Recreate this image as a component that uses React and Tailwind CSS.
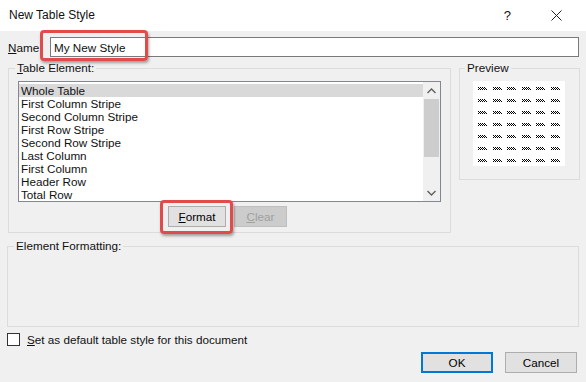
import React from 'react';

const items = [
  'Whole Table',
  'First Column Stripe',
  'Second Column Stripe',
  'First Row Stripe',
  'Second Row Stripe',
  'Last Column',
  'First Column',
  'Header Row',
  'Total Row',
];

function Glyph() {
  return (
    <svg width="9" height="4" viewBox="0 0 9 4" className="block">
      {[0, 2, 4, 6].map((x) => (
        <rect key={'a' + x} x={x} y="0" width="1" height="1" fill="#000" />
      ))}
      {[1, 3, 5, 7].map((x) => (
        <rect key={'b' + x} x={x} y="1" width="1" height="1" fill="#000" />
      ))}
      {[0, 2, 4, 6, 8].map((x) => (
        <rect key={'c' + x} x={x} y="2" width="1" height="1" fill="#000" />
      ))}
    </svg>
  );
}

function Button({ children, disabled, primary, className = '' }) {
  return (
    <div
      className={
        'flex h-[21px] items-center justify-center ' +
        (disabled
          ? 'border border-[#bfbfbf] bg-[#cccccc] text-[#a0a0a0] '
          : primary
          ? 'border-2 border-[#0078d7] bg-[#e1e1e1] text-black '
          : 'border border-[#adadad] bg-[#e1e1e1] text-black ') +
        className
      }
    >
      {children}
    </div>
  );
}

export default function App() {
  return (
    <div
      className="relative h-[382px] w-[586px] overflow-hidden bg-[#f0f0f0] text-[11.7px] leading-[13px] text-[#111]"
      style={{ fontFamily: '"Liberation Sans", Arial, sans-serif' }}
    >
      {/* title bar */}
      <div className="flex h-[31px] items-center bg-white pl-[9px] pr-[24px]">
        <span className="text-[12px]">New Table Style</span>
        <span className="ml-auto mr-[40px] text-[13px]">?</span>
        <svg width="11" height="11" viewBox="0 0 11 11">
          <path d="M0.5 0.5 L10.5 10.5 M10.5 0.5 L0.5 10.5" stroke="#222" strokeWidth="1" />
        </svg>
      </div>

      {/* name row */}
      <div className="mt-[6px] flex h-[20px] items-center pl-[8px] pr-[7px]">
        <span className="w-[42px]">
          <span className="underline">N</span>ame:
        </span>
        <div className="flex h-[20px] flex-1 items-center border border-[#7a7a7a] bg-white pl-[3px]">
          My New Style
        </div>
      </div>

      {/* groups */}
      <div className="mt-[4px] flex pl-[8px] pr-[6px]">
        <fieldset className="h-[172px] w-[443px] border border-[#dcdcdc] px-[9px] pt-[6px]">
          <legend className="-ml-[3px] px-[2px] leading-[14px]">
            <span className="underline">T</span>able Element:
          </legend>
          <div className="flex h-[121px] border border-[#828790] bg-white">
            <div className="flex-1 pt-[2px]">
              {items.map((it, i) => (
                <div
                  key={it}
                  className={'h-[13px] pl-[2px] ' + (i === 0 ? 'bg-[#d9d9d9]' : '')}
                >
                  {it}
                </div>
              ))}
            </div>
            <div className="flex w-[17px] flex-col items-center bg-[#f0f0f0]">
              <div className="flex h-[17px] items-center justify-center">
                <svg width="9" height="6" viewBox="0 0 9 6">
                  <path d="M0.5 5 L4.5 1 L8.5 5" stroke="#606060" strokeWidth="1.4" fill="none" />
                </svg>
              </div>
              <div className="h-[58px] w-[15px] bg-[#cdcdcd]" />
              <div className="mt-auto flex h-[17px] items-center justify-center">
                <svg width="9" height="6" viewBox="0 0 9 6">
                  <path d="M0.5 1 L4.5 5 L8.5 1" stroke="#606060" strokeWidth="1.4" fill="none" />
                </svg>
              </div>
            </div>
          </div>
          <div className="mt-[4px] flex gap-[8px] pl-[150px]">
            <Button className="w-[58px]">
              <span className="underline">F</span>ormat
            </Button>
            <Button disabled className="w-[53px]">
              <span className="underline">C</span>lear
            </Button>
          </div>
        </fieldset>

        <fieldset className="ml-[8px] h-[119px] w-[121px] border border-[#dcdcdc] pl-[13px] pt-[6px]">
          <legend className="-ml-[8px] px-[2px] leading-[14px]">Preview</legend>
          <div className="grid h-[85px] w-[92px] grid-cols-6 content-start gap-y-[8px] bg-white pl-[5px] pt-[6px]">
            {Array.from({ length: 42 }).map((_, i) => (
              <div key={i} className="h-[4px] w-[15px]">
                <Glyph />
              </div>
            ))}
          </div>
        </fieldset>
      </div>

      <div className="mt-[6px] pl-[7px] pr-[7px]">
        <fieldset className="h-[88px] border border-[#dcdcdc]">
          <legend className="ml-[6px] px-[2px] leading-[14px]">Element Formatting:</legend>
        </fieldset>
      </div>

      {/* checkbox */}
      <div className="mt-[6px] flex items-center pl-[7px]">
        <div className="h-[13px] w-[13px] border border-[#333] bg-white" />
        <span className="ml-[7px]">
          <span className="underline">S</span>et as default table style for this document
        </span>
      </div>

      <div className="mt-[6px] flex justify-end gap-[12px] pr-[9px]">
        <Button primary className="w-[72px]">OK</Button>
        <Button className="w-[72px]">Cancel</Button>
      </div>

      {/* red callouts */}
      <div className="absolute left-[40px] top-[30px] h-[31px] w-[108px] rounded-[4px] border-[3px] border-[#e24b4b] shadow-[1px_2px_3px_rgba(0,0,0,0.35)]" />
      <div className="absolute left-[160px] top-[200px] h-[34px] w-[73px] rounded-[4px] border-[3px] border-[#e24b4b] shadow-[1px_2px_3px_rgba(0,0,0,0.35)]" />
    </div>
  );
}
